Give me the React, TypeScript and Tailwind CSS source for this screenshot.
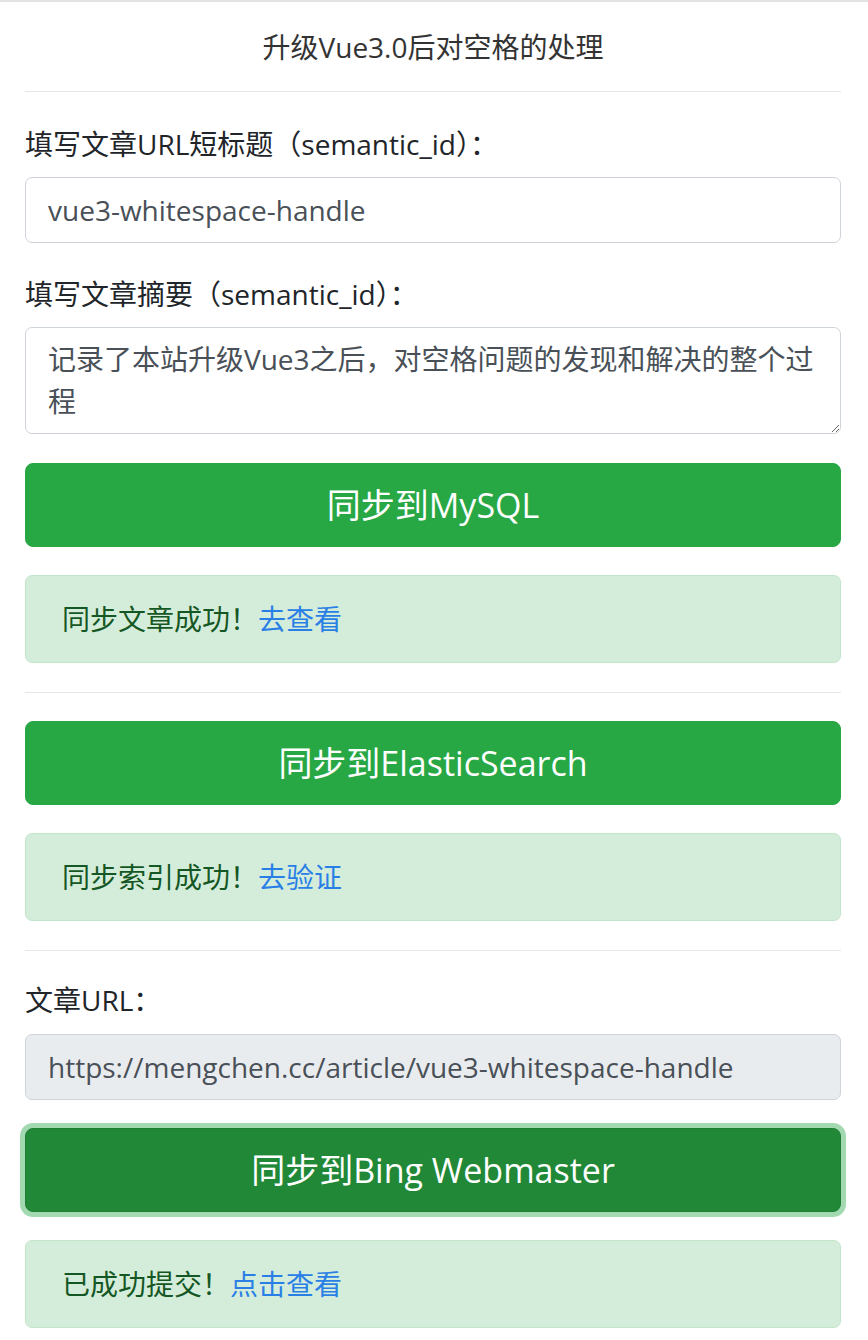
import React from 'react';

const font = "font-['Segoe_UI','Open_Sans','Noto_Sans_CJK_SC',sans-serif]";

const Hr = () => <hr className="mt-[29px] mb-[28px] border-t border-[#e6e6e6]" />;

const SyncButton: React.FC<{ label: string; focused?: boolean }> = ({ label, focused }) => (
  <button
    type="button"
    className={`block w-full h-[84px] rounded-[8px] border text-white text-[34px] leading-[50px] ${
      focused
        ? 'bg-[#218838] border-[#1e7e34] shadow-[0_0_0_5px_rgba(72,180,97,0.5)]'
        : 'bg-[#28a745] border-[#28a745]'
    }`}
  >
    {label}
  </button>
);

const Alert: React.FC<{ text: string; link: string }> = ({ text, link }) => (
  <div className="mt-[28px] h-[88px] flex items-center rounded-[7px] border border-[#c3e6cb] bg-[#d4edda] px-[36px] text-[28px] text-[#155724]">
    <span>{text}</span>
    <a href="#" className="text-[#2a7fe6]">
      {link}
    </a>
  </div>
);

export default function App() {
  return (
    <div className={`${font} min-h-[1340px] bg-white border-t-2 border-[#e3e3e3] text-[#212529]`}>
      <div className="pl-[25px] pr-[27px]">
        <h1 className="h-[89px] flex items-center justify-center text-[28px] text-[#333]">
          升级Vue3.0后对空格的处理
        </h1>
        <hr className="border-t border-[#e6e6e6]" />

        <label className="block mt-[31px] text-[28px] leading-[42px]">填写文章URL短标题（semantic_id）：</label>
        <input
          readOnly
          value="vue3-whitespace-handle"
          className="mt-[12px] block w-full h-[66px] rounded-[7px] border border-[#ced4da] bg-white px-[22px] text-[28px] text-[#495057] outline-none"
        />

        <label className="block mt-[30px] text-[28px] leading-[42px]">填写文章摘要（semantic_id）：</label>
        <textarea
          readOnly
          rows={2}
          value="记录了本站升级Vue3之后，对空格问题的发现和解决的整个过程"
          className="mt-[12px] block w-full h-[107px] rounded-[7px] border border-[#ced4da] bg-white px-[22px] py-[10px] text-[28px] leading-[42px] text-[#495057] outline-none"
        />

        <div className="mt-[29px]">
          <SyncButton label="同步到MySQL" />
        </div>
        <Alert text="同步文章成功！" link="去查看" />

        <Hr />

        <SyncButton label="同步到ElasticSearch" />
        <Alert text="同步索引成功！" link="去验证" />

        <Hr />

        <label className="block mt-[10px] text-[28px] leading-[42px]">文章URL：</label>
        <input
          readOnly
          value="https://mengchen.cc/article/vue3-whitespace-handle"
          className="mt-[13px] block w-full h-[66px] rounded-[7px] border border-[#ced4da] bg-[#e9ecef] px-[22px] text-[28px] text-[#495057] outline-none"
        />

        <div className="mt-[28px]">
          <SyncButton label="同步到Bing Webmaster" focused />
        </div>
        <Alert text="已成功提交！" link="点击查看" />
      </div>
    </div>
  );
}
